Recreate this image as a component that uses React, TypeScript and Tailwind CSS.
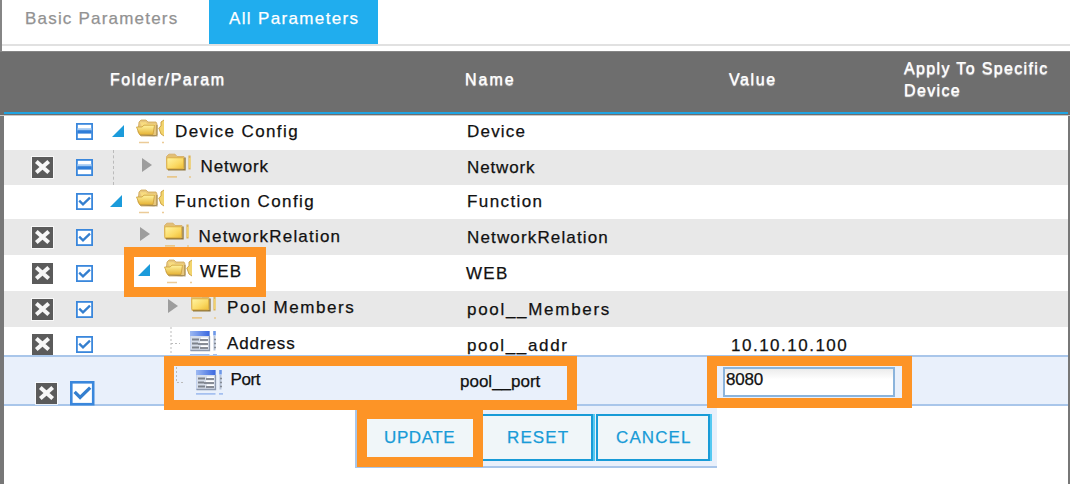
import React from "react";

const Delete = ({ at }: { at: string }) => (
  <svg className={`shrink-0 ${at}`} width="23" height="23" viewBox="0 0 23 23">
    <rect width="23" height="23" fill="#fff" opacity=".7" />
    <rect x="1" y="1" width="21" height="21" fill="#5b5b5b" />
    <path d="M5.3 5.5L17.7 16.5M17.7 5.5L5.3 16.5" stroke="#f7f7f7" strokeWidth="4" />
  </svg>
);

const Check = ({ at, partial, size = 17 }: { at: string; partial?: boolean; size?: number }) => (
  <svg className={`shrink-0 ${at}`} width={size} height={size} viewBox="0 0 17 17">
    <rect x=".9" y=".9" width="15.2" height="15.2" fill="#fff" stroke="#3a87dc" strokeWidth="1.8" />
    {partial ? (
      <g>
        <rect x="1.5" y="5.2" width="14" height="2.6" fill="#a4caf3" />
        <rect x="1.5" y="7.2" width="14" height="3.4" fill="#2f7dd8" />
      </g>
    ) : (
      <path d="M3.2 7.6L7 11.4L14 4.6" fill="none" stroke="#347fcf" strokeWidth="2.3" />
    )}
  </svg>
);

const Opened = ({ at }: { at: string }) => (
  <svg className={`shrink-0 ${at}`} width="12" height="12" viewBox="0 0 12 12">
    <path d="M12 0V12H0Z" fill="#1b9bdb" />
  </svg>
);

const Closed = ({ at }: { at: string }) => (
  <svg className={`shrink-0 ${at}`} width="10" height="14" viewBox="0 0 10 14">
    <path d="M0 0L10 7L0 14Z" fill="#9d9d9d" />
  </svg>
);

const FolderOpen = ({ at }: { at: string }) => (
  <svg className={`shrink-0 ${at}`} width="28" height="25" viewBox="0 0 28 25">
    <defs>
      <linearGradient id="flap" x1="0" y1="0" x2="0" y2="1">
        <stop offset="0" stopColor="#fff3a0" />
        <stop offset="1" stopColor="#e6b437" />
      </linearGradient>
    </defs>
    <path d="M3 3L5 1H10L12 3H20L21 5V16L18 17H5L2 13Z" fill="#e8c87e" stroke="#cfa654" strokeWidth=".8" />
    <path d="M4 15.8L21 16.8V6" fill="none" stroke="#8f7848" strokeWidth="1.2" opacity=".7" />
    <path d="M4 3.3H10L11 5H19V8H6Z" fill="#f8dc80" />
    <path d="M.5 8H6L8 6.2H18.5L17 15.5H3.5Z" fill="url(#flap)" stroke="#cc9f3a" strokeWidth=".8" />
    <path d="M28 1L25 3V7L22.8 9L25 15L28 17" fill="#f2d46d" stroke="#c79b3d" strokeWidth=".9" />
    <path d="M3 23.5H13M26 23.5H28" stroke="#ebcb98" strokeWidth="1.7" />
  </svg>
);

const FolderClosed = ({ at }: { at: string }) => (
  <svg className={`shrink-0 ${at}`} width="26" height="25" viewBox="0 0 26 25">
    <defs>
      <linearGradient id="face" x1="0" y1="0" x2="1" y2="1">
        <stop offset="0" stopColor="#fff5a5" />
        <stop offset=".6" stopColor="#fbd963" />
        <stop offset="1" stopColor="#edbd35" />
      </linearGradient>
    </defs>
    <path d="M1.5 3.5L4 1.2H10L12 3.5H19V16.5H2Z" fill="#e2bf75" stroke="#d9b36d" />
    <path d="M3 16.8H20V4.5" fill="none" stroke="#91783f" strokeWidth="1.4" />
    <rect x="1.8" y="4.8" width="16.8" height="11" rx="1" fill="url(#face)" stroke="#d9a93a" strokeWidth=".8" />
    <path d="M24.5 2.5V16.5" stroke="#ddb45b" strokeWidth="2.2" />
    <path d="M24.9 5V15" stroke="#f8dc75" strokeWidth="1.2" />
    <path d="M2 23.8H12M24 24H26" stroke="#e8c78c" strokeWidth="1.7" />
  </svg>
);

const Page = ({ at }: { at: string }) => (
  <svg className={`shrink-0 ${at}`} width="27" height="25" viewBox="0 0 27 25">
    <defs>
      <linearGradient id="bar" x1="0" y1="0" x2="1" y2="0">
        <stop offset="0" stopColor="#9db9f2" />
        <stop offset="1" stopColor="#3a68e0" />
      </linearGradient>
    </defs>
    <rect x=".5" y=".5" width="19" height="19" fill="#d7deea" stroke="#c5d3ee" />
    <path d="M.5 19.5H19.5V5" fill="none" stroke="#8d99ae" strokeWidth="1.3" />
    <rect x="0" y="0" width="19.5" height="5" fill="url(#bar)" />
    <path d="M2 8.5H9M2 12.5H8M2 16.5H9" stroke="#7d828b" strokeWidth="1.8" />
    <path d="M11 7.3H18M10 11.3H18M11 15.3H18" stroke="#fff" strokeWidth="1.6" />
    <path d="M10 9H18M8 13H18M10 17H18" stroke="#6d727b" strokeWidth="1.6" />
    <path d="M24.5 0V4.5" stroke="#6d98e8" strokeWidth="2.6" />
    <path d="M24.5 5V19.5" stroke="#b7c3d7" strokeWidth="2" />
    <path d="M24 8.5H26M24 12.5H26M24 16.5H26" stroke="#858b95" strokeWidth="1.5" />
    <path d="M0 23.8H19.5M23 23.8H27" stroke="#a5c0f0" strokeWidth="1.8" />
  </svg>
);

type RowProps = {
  row: string;
  del?: string;
  check: React.ReactNode;
  tree: React.ReactNode;
  name: React.ReactNode;
  value?: React.ReactNode;
};

const Row = ({ row, del, check, tree, name, value }: RowProps) => (
  <div className={`flex shrink-0 items-start overflow-hidden ${row}`}>
    <div className="flex w-[64px] shrink-0 items-start pl-[27px]">{del && <Delete at={del} />}</div>
    <div className="flex w-[36px] shrink-0 items-start">{check}</div>
    <div className="flex w-[348px] shrink-0 items-start">{tree}</div>
    <div className="flex w-[266px] shrink-0 items-start">{name}</div>
    <div className="flex grow items-start">{value}</div>
  </div>
);

const T = ({ c, children }: { c: string; children: React.ReactNode }) => (
  <span className={`block shrink-0 whitespace-nowrap pl-px leading-[20px] [-webkit-text-stroke:.25px_currentColor] ${c}`}>{children}</span>
);

export default function App() {
  return (
    <div className="relative flex h-[484px] w-[1070px] flex-col overflow-hidden bg-white font-['Liberation_Sans',sans-serif] text-[17px] text-[#111]">
      <div className="flex h-[51px] shrink-0 flex-col border-l-2 border-[#858585]">
        <div className="flex h-[44px] shrink-0 items-start">
          <div className="w-[207px] pl-[22px] pt-[9px] text-[#929292]">
            <T c="tracking-[1.2px]">Basic Parameters</T>
          </div>
          <div className="h-[44px] w-[169px] bg-[#20adee] pl-[19px] pt-[9px] text-white">
            <T c="tracking-[1.35px]">All Parameters</T>
          </div>
        </div>
        <div className="h-[2px] shrink-0 bg-[#e1e1e1]" />
      </div>

      <div className="flex h-[65px] shrink-0 flex-col border-b border-t border-b-[#c9c9c9] border-t-[#858585] bg-[#6e6e6e]">
        <div className="flex h-[60px] items-start pl-[109px] text-[16px] text-white [text-shadow:0_1px_1px_#ddd]">
          <div className="w-[355px] pt-[18px]"><T c="tracking-[1.55px]">Folder/Param</T></div>
          <div className="w-[264px] pt-[18px]"><T c="tracking-[2px]">Name</T></div>
          <div className="w-[175px] pt-[18px]"><T c="tracking-[1.6px]">Value</T></div>
          <div className="pt-[7px]">
            <T c="tracking-[1.35px]">Apply To Specific</T>
            <T c="mt-[2px] tracking-[1.35px]">Device</T>
          </div>
        </div>
        <div className="ml-[4px] mr-[2px] h-[2px] shrink-0 bg-[#20a4e2]" />
      </div>

      <div className="flex grow flex-col border-l-4 border-r-2 border-[#777]">
        <Row
          row="h-[34px]"
          check={<Check partial at="ml-[7.5px] mt-[7px]" />}
          tree={<><Opened at="ml-[7.5px] mt-[9px]" /><FolderOpen at="ml-[12.5px] mt-[3px]" /><T c="ml-[10px] mt-[6px] tracking-[1.4px]">Device Config</T></>}
          name={<T c="ml-[14px] mt-[6px] tracking-[1.2px]">Device</T>}
        />
        <Row
          row="h-[35px] bg-[#e8e8e8]"
          del="mt-[6px]"
          check={<Check partial at="ml-[7.5px] mt-[9px]" />}
          tree={<><div className="ml-[9px] h-[35px] w-px border-l border-dashed border-[#bbb]" /><Closed at="ml-[28px] mt-[7.5px]" /><FolderClosed at="ml-[13px] mt-[3px]" /><T c="ml-[8.5px] mt-[7px] tracking-[.85px]">Network</T></>}
          name={<T c="ml-[14px] mt-[8px] tracking-[.85px]">Network</T>}
        />
        <Row
          row="h-[34px]"
          check={<Check at="ml-[7.5px] mt-[8px]" />}
          tree={<><Opened at="ml-[6px] mt-[10px]" /><FolderOpen at="ml-[14px] mt-[4px]" /><T c="ml-[10px] mt-[7px] tracking-[1.4px]">Function Config</T></>}
          name={<T c="ml-[14px] mt-[7px] tracking-[1.4px]">Function</T>}
        />
        <Row
          row="h-[36px] bg-[#e8e8e8]"
          del="mt-[7px]"
          check={<Check at="ml-[7.5px] mt-[10px]" />}
          tree={<><Closed at="ml-[36px] mt-[8px]" /><FolderClosed at="ml-[13px] mt-[3px]" /><T c="ml-[8.5px] mt-[7.5px] tracking-[1.2px]">NetworkRelation</T></>}
          name={<T c="ml-[14px] mt-[9px] tracking-[1.15px]">NetworkRelation</T>}
        />
        <Row
          row="h-[36px]"
          del="mt-[7px]"
          check={<Check at="ml-[7.5px] mt-[10px]" />}
          tree={<><Opened at="ml-[34px] mt-[9px]" /><FolderOpen at="ml-[14px] mt-[4px]" /><T c="ml-[7px] mt-[7px] tracking-[1.2px]">WEB</T></>}
          name={<T c="ml-[13px] mt-[9px] tracking-[1.3px]">WEB</T>}
        />
        <Row
          row="h-[36px] bg-[#e8e8e8]"
          del="mt-[7px]"
          check={<Check at="ml-[7.5px] mt-[10px]" />}
          tree={<><Closed at="ml-[64px] mt-[8px]" /><FolderClosed at="ml-[12px] mt-[3px]" /><T c="ml-[10px] mt-[7px] tracking-[1.55px]">Pool Members</T></>}
          name={<T c="ml-[14px] mt-[9px] tracking-[1.7px]">pool__Members</T>}
        />
        <Row
          row="h-[28px]"
          del="mt-[6px]"
          check={<Check at="ml-[7.5px] mt-[9px]" />}
          tree={
            <>
              <svg className="ml-[66px] shrink-0" width="11" height="28">
                <path d="M1 0V28M1 16.5H10" fill="none" stroke="#bbb" strokeDasharray="2 2" />
              </svg>
              <Page at="ml-[9px] mt-[4px]" />
              <T c="ml-[9px] mt-[6.5px] tracking-[.9px]">Address</T>
            </>
          }
          name={<T c="ml-[14px] mt-[8.5px] tracking-[1.65px]">pool__addr</T>}
          value={<T c="ml-[12px] mt-[8.5px] tracking-[1.5px]">10.10.10.100</T>}
        />
        <div className="flex h-[51px] shrink-0 items-start border-y-2 border-[#a9c6ea] bg-[#e9f0fb]">
          <div className="w-[64px] shrink-0 pl-[31px] pt-[25px]"><Delete at="" /></div>
          <div className="w-[36px] shrink-0 pl-[2px] pt-[24px]"><Check size={24.5} at="" /></div>
          <div className="flex w-[348px] shrink-0 items-start">
            <svg className="ml-[71px] mt-[10px] shrink-0" width="11" height="17">
              <path d="M1.5 0V15.5H10" fill="none" stroke="#bbb" strokeDasharray="2 2" />
            </svg>
            <Page at="ml-[10px] mt-[13px]" />
            <T c="ml-[6.5px] mt-[13px] tracking-[-.4px]">Port</T>
          </div>
          <div className="w-[266px] shrink-0 pl-[7px] pt-[14.5px]"><T c="">pool__port</T></div>
          <div className="ml-[5px] mt-[10px] h-[30px] w-[172px] border-2 border-[#8bb4dc] bg-linear-to-b from-[#ececec] to-white to-40%">
            <T c="mt-px tracking-[-.2px]">8080</T>
          </div>
        </div>
        <div className="ml-[351px] flex h-[62px] w-[362px] shrink-0 items-start border-b-2 border-l-2 border-[#a9c6ea] bg-[#e9f0fb] pt-[8px] text-[#189bd7]">
          <div className="h-[47px] w-[122px] bg-[#f0f6f9] pl-[26px] pt-[13.5px]"><T c="tracking-[.6px]">UPDATE</T></div>
          <div className="h-[47px] w-[114px] border-2 border-[#189bd7] bg-[#f0f6f9] pl-[25px] pt-[11.5px] shadow-[2px_0_0_#55c9f1]"><T c="tracking-[1.1px]">RESET</T></div>
          <div className="ml-[3px] h-[47px] w-[114px] border-2 border-[#189bd7] bg-[#f0f6f9] pl-[17px] pt-[11.5px] shadow-[2px_0_0_#55c9f1]"><T c="tracking-[1.1px]">CANCEL</T></div>
        </div>
      </div>

      <div className="absolute left-[124px] top-[247px] h-[50px] w-[142px] border-[10px] border-[#fd9426]" />
      <div className="absolute left-[164px] top-[356px] h-[54px] w-[413px] border-[10px] border-[#fd9426]" />
      <div className="absolute left-[707px] top-[356px] h-[52px] w-[205px] border-[10px] border-[#fd9426]" />
      <div className="absolute left-[357px] top-[409px] h-[58px] w-[126px] border-[10px] border-[#fd9426]" />
    </div>
  );
}
